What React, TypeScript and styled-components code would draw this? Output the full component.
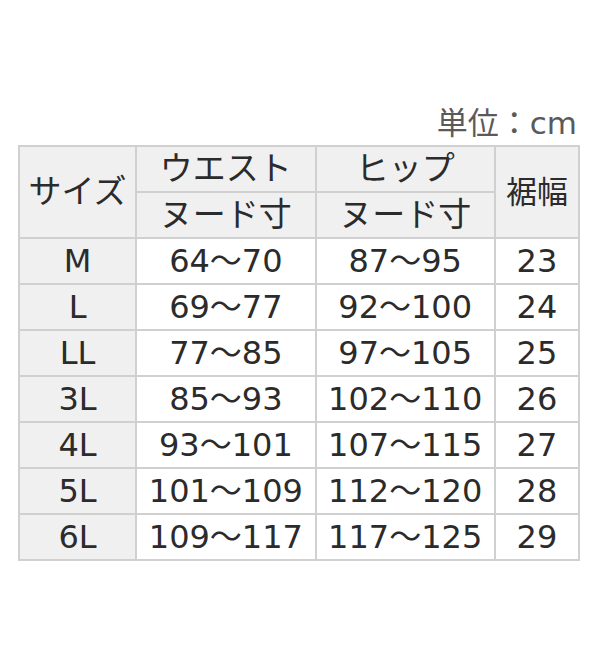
import styled, { createGlobalStyle } from "styled-components";

const GlobalStyle = createGlobalStyle`
  html, body {
    margin: 0;
    padding: 0;
    background: #ffffff;
  }
  body {
    font-family: "DejaVu Sans", "Noto Sans CJK JP", sans-serif;
    color: #2b2b2b;
  }
`;

interface SizeRow {
  size: string;
  waist: string;
  hip: string;
  hem: string;
}

const rows: SizeRow[] = [
  { size: "M", waist: "64～70", hip: "87～95", hem: "23" },
  { size: "L", waist: "69～77", hip: "92～100", hem: "24" },
  { size: "LL", waist: "77～85", hip: "97～105", hem: "25" },
  { size: "3L", waist: "85～93", hip: "102～110", hem: "26" },
  { size: "4L", waist: "93～101", hip: "107～115", hem: "27" },
  { size: "5L", waist: "101～109", hip: "112～120", hem: "28" },
  { size: "6L", waist: "109～117", hip: "117～125", hem: "29" },
];

export default function App() {
  return (
    <Page>
      <GlobalStyle />
      <Chart>
        <Unit>単位：cm</Unit>
        <Table>
          <colgroup>
            <col style={{ width: 117 }} />
            <col style={{ width: 179 }} />
            <col style={{ width: 179 }} />
            <col style={{ width: 84 }} />
          </colgroup>
          <thead>
            <tr>
              <HeadCell rowSpan={2}>サイズ</HeadCell>
              <HeadCell>ウエスト</HeadCell>
              <HeadCell>ヒップ</HeadCell>
              <HeadCell rowSpan={2} $small>
                裾幅
              </HeadCell>
            </tr>
            <tr>
              <HeadCell>ヌード寸</HeadCell>
              <HeadCell>ヌード寸</HeadCell>
            </tr>
          </thead>
          <tbody>
            {rows.map((row) => (
              <tr key={row.size}>
                <SizeCell>{row.size}</SizeCell>
                <Cell>{row.waist}</Cell>
                <Cell>{row.hip}</Cell>
                <Cell>{row.hem}</Cell>
              </tr>
            ))}
          </tbody>
        </Table>
      </Chart>
    </Page>
  );
}

const Page = styled.div`
  width: 600px;
  height: 660px;
  padding: 103px 0 0 18px;
  box-sizing: border-box;
`;

const Chart = styled.div`
  width: 562px;
  display: flex;
  flex-direction: column;
  align-items: flex-end;
`;

const Unit = styled.div`
  font-size: 31px;
  line-height: 40px;
  color: #5a5a5a;
  margin-right: 3px;
  margin-bottom: 2px;
`;

const Table = styled.table`
  width: 562px;
  border-collapse: collapse;
  table-layout: fixed;
  border: 2px solid #d0d0d0;
`;

const baseCell = `
  border: 2px solid #d0d0d0;
  height: 44px;
  padding: 0;
  text-align: center;
  vertical-align: middle;
  font-size: 32px;
  line-height: 44px;
  white-space: nowrap;
  font-weight: 400;
`;

const HeadCell = styled.th<{ $small?: boolean }>`
  ${baseCell}
  background: #f0f0f0;
  font-size: ${(p) => (p.$small ? "31px" : "33px")};
`;

const SizeCell = styled.td`
  ${baseCell}
  background: #f0f0f0;
`;

const Cell = styled.td`
  ${baseCell}
  background: #ffffff;
`;
